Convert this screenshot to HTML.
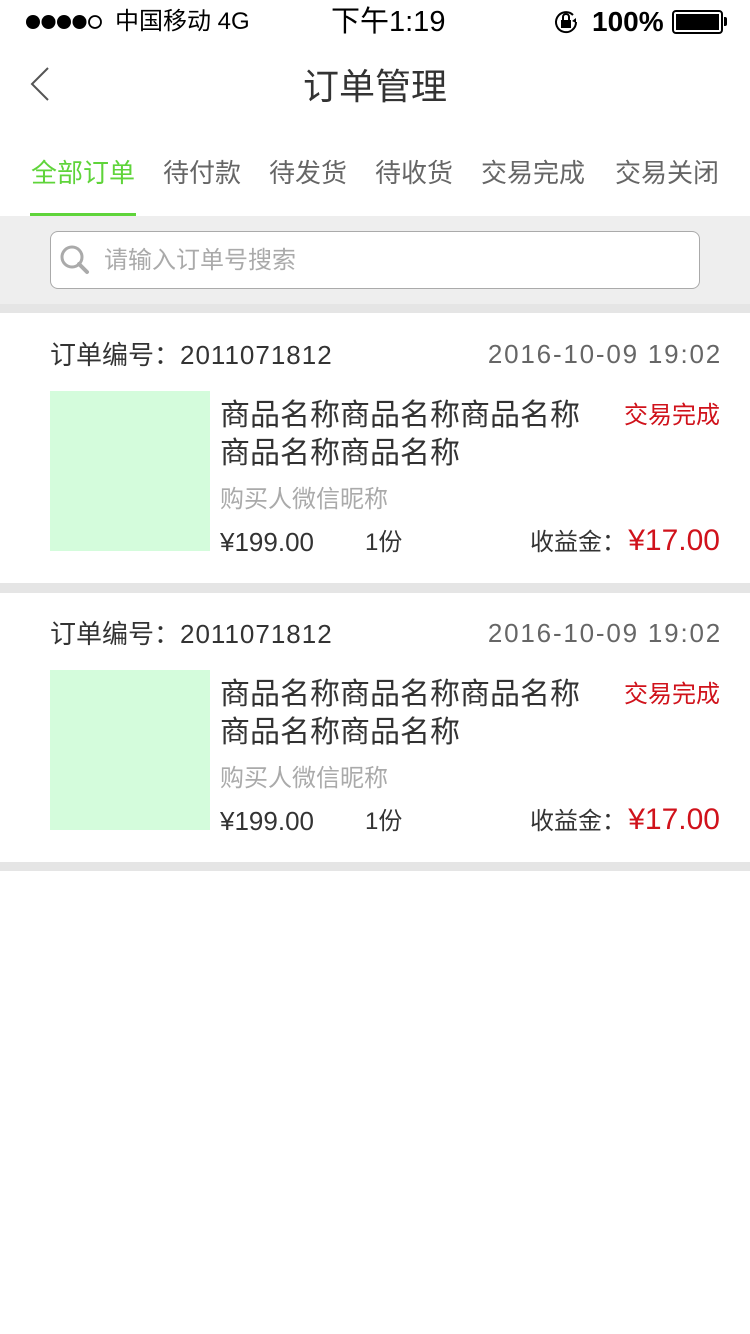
<!DOCTYPE html>
<html><head><meta charset="utf-8"><style>
*{margin:0;padding:0;box-sizing:border-box}
body{width:750px;height:1334px;background:#fff;font-family:"Liberation Sans","Noto Sans CJK SC",sans-serif;position:relative;overflow:hidden;color:#333}
.a{position:absolute;white-space:nowrap;line-height:30px}
.card{position:absolute;left:0;width:750px;height:270px;background:#fff}
.sep{position:absolute;left:0;width:750px;height:10px;background:#e5e5e5}
.dt{letter-spacing:1.8px}
</style></head><body>
<svg class="a" style="left:25px;top:13px" width="80" height="18" viewBox="0 0 80 18"><circle cx="8" cy="9" r="7" fill="#000"/><circle cx="23.5" cy="9" r="7" fill="#000"/><circle cx="39" cy="9" r="7" fill="#000"/><circle cx="54.5" cy="9" r="7" fill="#000"/><circle cx="70" cy="9" r="6" fill="none" stroke="#000" stroke-width="1.8"/></svg>
<div class="a" style="left:115px;top:7px;font-size:24px;color:#000">中国移动 4G</div>
<div class="a" style="left:331px;top:7px;font-size:29px;color:#000">下午1:19</div>
<svg class="a" style="left:553px;top:9px" width="26" height="26" viewBox="0 0 26 26"><path d="M20 6A10 10 0 1 0 23 13" fill="none" stroke="#000" stroke-width="2"/><path d="M23 9l0 5-4-2z" fill="#000"/><rect x="8" y="11" width="10" height="8" fill="#000"/><path d="M10 11V8a3 3 0 0 1 6 0v3" fill="none" stroke="#000" stroke-width="2"/></svg>
<div class="a" style="left:592px;top:7px;font-size:28px;color:#000;font-weight:bold">100%</div>
<div class="a" style="left:672px;top:10px;width:51px;height:24px;border:2px solid #000;border-radius:4px;padding:2px"><div style="width:100%;height:100%;background:#000"></div></div>
<div class="a" style="left:724px;top:17px;width:3px;height:9px;background:#000;border-radius:0 2px 2px 0"></div>

<svg class="a" style="left:28px;top:66px" width="24" height="36" viewBox="0 0 24 36"><path d="M20 2L4 18l16 16" fill="none" stroke="#555" stroke-width="2"/></svg>
<div class="a" style="left:0;width:750px;text-align:center;top:67px;font-size:36px;line-height:40px;color:#333">订单管理</div>

<div class="a" style="left:31px;top:158px;font-size:26px;color:#5fd43a">全部订单</div>
<div class="a" style="left:30px;top:213px;width:106px;height:3px;background:#5fd43a"></div>
<div class="a" style="left:163px;top:158px;font-size:26px;color:#666">待付款</div>
<div class="a" style="left:269px;top:158px;font-size:26px;color:#666">待发货</div>
<div class="a" style="left:375px;top:158px;font-size:26px;color:#666">待收货</div>
<div class="a" style="left:481px;top:158px;font-size:26px;color:#666">交易完成</div>
<div class="a" style="left:615px;top:158px;font-size:26px;color:#666">交易关闭</div>

<div class="a" style="left:0;top:216px;width:750px;height:88px;background:#eee"></div>
<div class="a" style="left:50px;top:231px;width:650px;height:58px;background:#fff;border:1.5px solid #aaa;border-radius:8px"></div>
<svg class="a" style="left:59px;top:244px" width="32" height="32" viewBox="0 0 32 32"><circle cx="13" cy="13" r="10" fill="none" stroke="#aaa" stroke-width="3"/><path d="M20 20l8 8" stroke="#aaa" stroke-width="4" stroke-linecap="round"/></svg>
<div class="a" style="left:104px;top:246px;font-size:24px;color:#aaa">请输入订单号搜索</div>
<div class="sep" style="top:304px;height:9px"></div>

<div class="card" style="top:313px">
<div class="a" style="left:50px;top:27px;font-size:26px;color:#333">订单编号：<span style="letter-spacing:1px">2011071812</span></div>
<div class="a dt" style="right:28px;top:26px;font-size:26px;color:#666">2016-10-09 19:02</div>
<div class="a" style="left:50px;top:78px;width:160px;height:160px;background:#d4fcdc"></div>
<div class="a" style="left:220px;top:84px;font-size:30px;line-height:38px;color:#333">商品名称商品名称商品名称<br>商品名称商品名称</div>
<div class="a" style="right:30px;top:88px;font-size:24px;color:#d0121b">交易完成</div>
<div class="a" style="left:220px;top:172px;font-size:24px;color:#aaa">购买人微信昵称</div>
<div class="a" style="left:220px;top:214px;font-size:26px;color:#333">¥199.00</div>
<div class="a" style="left:365px;top:215px;font-size:24px;color:#333">1份</div>
<div class="a" style="left:530px;top:215px;font-size:24px;color:#333">收益金：</div>
<div class="a" style="right:30px;top:213px;font-size:30px;color:#d0121b">¥17.00</div>
</div>
<div class="sep" style="top:583px"></div>

<div class="card" style="top:593px">
<div class="a" style="left:50px;top:26px;font-size:26px;color:#333">订单编号：<span style="letter-spacing:1px">2011071812</span></div>
<div class="a dt" style="right:28px;top:25px;font-size:26px;color:#666">2016-10-09 19:02</div>
<div class="a" style="left:50px;top:77px;width:160px;height:160px;background:#d4fcdc"></div>
<div class="a" style="left:220px;top:83px;font-size:30px;line-height:38px;color:#333">商品名称商品名称商品名称<br>商品名称商品名称</div>
<div class="a" style="right:30px;top:87px;font-size:24px;color:#d0121b">交易完成</div>
<div class="a" style="left:220px;top:171px;font-size:24px;color:#aaa">购买人微信昵称</div>
<div class="a" style="left:220px;top:213px;font-size:26px;color:#333">¥199.00</div>
<div class="a" style="left:365px;top:214px;font-size:24px;color:#333">1份</div>
<div class="a" style="left:530px;top:214px;font-size:24px;color:#333">收益金：</div>
<div class="a" style="right:30px;top:212px;font-size:30px;color:#d0121b">¥17.00</div>
</div>
<div class="sep" style="top:862px;height:9px"></div>
</body></html>
